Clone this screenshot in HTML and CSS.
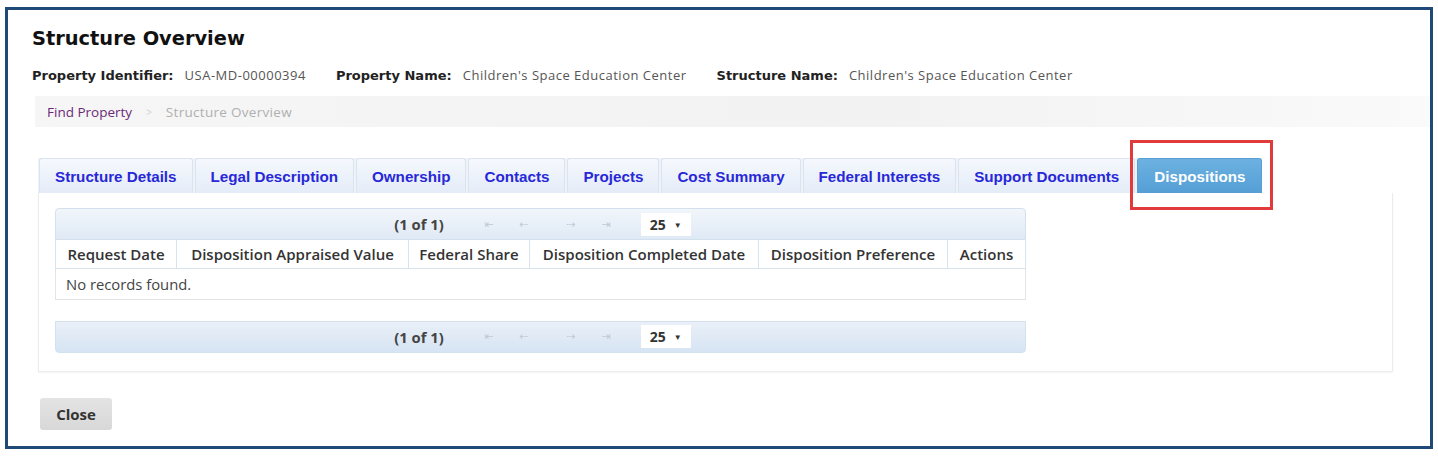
FILE: index.html
```html
<!DOCTYPE html>
<html lang="en">
<head>
<meta charset="utf-8">
<title>Structure Overview</title>
<link rel="stylesheet" href="styles.css">
</head>
<body>
<div class="frame">
  <h1 class="title">Structure Overview</h1>
  <div class="info">
    <span class="lbl">Property Identifier:</span><span class="val">USA-MD-00000394</span>
    <span class="lbl">Property Name:</span><span class="val">Children's Space Education Center</span>
    <span class="lbl">Structure Name:</span><span class="val">Children's Space Education Center</span>
  </div>
  <div class="crumbs">
    <a class="crumb-link">Find Property</a>
    <span class="crumb-sep">&gt;</span>
    <span class="crumb-cur">Structure Overview</span>
  </div>
  <div class="tabview">
    <ul class="tabs">
      <li class="tab">Structure Details</li>
      <li class="tab">Legal Description</li>
      <li class="tab">Ownership</li>
      <li class="tab">Contacts</li>
      <li class="tab">Projects</li>
      <li class="tab">Cost Summary</li>
      <li class="tab">Federal Interests</li>
      <li class="tab">Support Documents</li>
      <li class="tab active">Dispositions<span class="highlight"></span></li>
    </ul>
    <div class="panel">
      <div class="datatable">
        <div class="pager pager-top">
          <span class="pcount">(1 of 1)</span>
          <span class="picons">
            <span class="pi">&#8676;</span><span class="pi">&#8672;</span>
          </span>
          <span class="picons">
            <span class="pi">&#8674;</span><span class="pi">&#8677;</span>
          </span>
          <span class="psel">25 <span class="caret">&#9660;</span></span>
        </div>
        <table class="grid">
          <thead>
            <tr>
              <th class="c1">Request Date</th>
              <th class="c2">Disposition Appraised Value</th>
              <th class="c3">Federal Share</th>
              <th class="c4">Disposition Completed Date</th>
              <th class="c5">Disposition Preference</th>
              <th class="c6">Actions</th>
            </tr>
          </thead>
          <tbody>
            <tr><td colspan="6">No records found.</td></tr>
          </tbody>
        </table>
        <div class="pager pager-bottom">
          <span class="pcount">(1 of 1)</span>
          <span class="picons">
            <span class="pi">&#8676;</span><span class="pi">&#8672;</span>
          </span>
          <span class="picons">
            <span class="pi">&#8674;</span><span class="pi">&#8677;</span>
          </span>
          <span class="psel">25 <span class="caret">&#9660;</span></span>
        </div>
      </div>
    </div>
  </div>
  <div class="actions">
    <button class="btn">Close</button>
  </div>
</div>
</body>
</html>
```

FILE: styles.css
```css
* { box-sizing: border-box; }
html, body { margin: 0; padding: 0; background: #ffffff; }
body { font-family: "Open Sans", "Liberation Sans", sans-serif; color: #333; }

.frame {
  margin: 7px 5px 0 5px;
  width: 1428px;
  height: 442px;
  border: 3px solid #1f4a78;
  padding: 16px 0 0 24px;
}

.title {
  margin: 0;
  font-family: "DejaVu Sans", "Liberation Sans", sans-serif;
  font-weight: bold;
  font-size: 19.4px;
  line-height: 26px;
  color: #111;
}

.info {
  margin-top: 15px;
  display: flex;
  align-items: baseline;
  line-height: 16px;
}
.lbl {
  font-family: "DejaVu Sans", "Liberation Sans", sans-serif;
  font-weight: bold;
  font-size: 13px;
  color: #222;
  margin-right: 11px;
}
.val {
  color: #555;
  font-size: 13px;
  letter-spacing: 0.5px;
  margin-right: 30px;
}

.crumbs {
  margin: 12px 0 0 3px;
  height: 31px;
  display: flex;
  align-items: center;
  gap: 14px;
  padding-left: 12px;
  font-size: 13.5px;
  background: linear-gradient(to right, #f6f6f6, #f2f2f2 60%, #fafafa);
}
.crumb-link { color: #6b2a78; }
.crumb-sep { color: #d0d0d0; font-size: 10px; }
.crumb-cur { color: #b0b0b0; letter-spacing: 0.3px; }

.tabview {
  margin: 31px 0 0 6px;
  width: 1355px;
}
.tabs {
  list-style: none;
  margin: 0;
  padding: 0 0 0 1px;
  display: flex;
  gap: 2px;
  width: 1250px;
  background: linear-gradient(to right, #eef3fa 90%, #ffffff);
}
.tab {
  position: relative;
  height: 35px;
  padding: 0 15px;
  display: flex;
  align-items: center;
  font-family: "Liberation Sans", sans-serif;
  font-weight: bold;
  font-size: 15.2px;
  color: #2828d8;
  background: linear-gradient(to bottom, #f5f8fd, #e4ecf8);
  border: 1px solid #dbe3ee;
  border-bottom: none;
  border-radius: 3px 3px 0 0;
}
.tab.active {
  background: linear-gradient(to bottom, #6cb1e0, #559fd6);
  border-color: #5a9fd4;
  color: #fff;
  padding: 0 16px;
}
.highlight {
  position: absolute;
  top: -19px;
  left: -8px;
  right: -12px;
  bottom: -17px;
  border: 3px solid #e03a3a;
}

.panel {
  height: 179px;
  border: 1px solid #ececec;
  border-top: none;
  box-shadow: 0 1px 2px rgba(0,0,0,0.05);
  padding: 15px 0 0 16px;
}
.datatable { width: 971px; }

.pager {
  height: 32px;
  display: flex;
  align-items: center;
  justify-content: center;
  border: 1px solid #d3e0ee;
  border-radius: 4px 4px 0 0;
  background: linear-gradient(to bottom, #f2f6fb, #dfe9f5);
  font-size: 14px;
  padding-left: 4px;
}
.pager-bottom {
  margin-top: 21px;
  border-radius: 0 0 4px 4px;
  background: linear-gradient(to bottom, #e9f0f8, #d6e4f3);
}
.pcount {
  font-weight: bold;
  color: #444;
  font-size: 14.8px;
  margin-right: 40px;
}
.picons { display: flex; gap: 25px; margin-right: 37px; }
.picons + .picons { margin-right: 30px; }
.pi {
  color: #c2cad5;
  font-size: 11px;
  width: 10px;
  text-align: center;
  font-family: "DejaVu Sans", sans-serif;
}
.psel {
  display: inline-flex;
  align-items: center;
  justify-content: center;
  gap: 8px;
  width: 50px;
  height: 23px;
  background: #fff;
  font-weight: bold;
  color: #333;
  font-size: 14px;
}
.caret { font-size: 8px; }

.grid {
  width: 100%;
  border-collapse: collapse;
  font-size: 15px;
}
.grid th {
  height: 28px;
  padding: 0 8px;
  text-align: center;
  font-weight: 600;
  color: #333;
  border: 1px solid #d9e3ee;
  border-top: none;
  white-space: nowrap;
  background: #fff;
}
.grid th.c1 { width: 121px; }
.grid th.c2 { width: 232px; }
.grid th.c3 { width: 121px; }
.grid th.c4 { width: 229px; }
.grid th.c5 { width: 189px; }
.grid td {
  height: 31px;
  padding: 0 10px;
  color: #444;
  font-size: 14.8px;
  border: 1px solid #e4e4e4;
  border-top: none;
}

.actions { margin: 26px 0 0 8px; }
.btn {
  width: 72px;
  height: 32px;
  border: none;
  border-radius: 3px;
  background: linear-gradient(to bottom, #e3e3e3, #d8d8d8);
  font-family: "Open Sans", "Liberation Sans", sans-serif;
  font-weight: bold;
  font-size: 15px;
  color: #333;
  padding: 0;
}
```
